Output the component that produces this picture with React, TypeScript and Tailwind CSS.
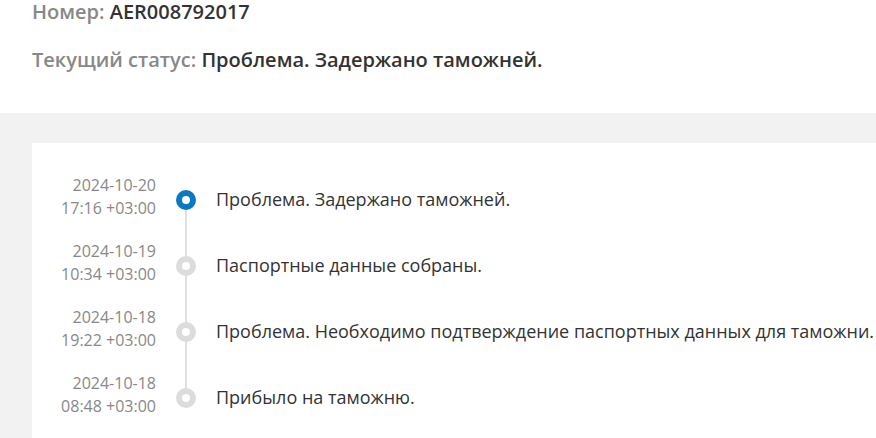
import React from 'react';

const events = [
  { date: '2024-10-20', time: '17:16 +03:00', text: 'Проблема. Задержано таможней.', active: true },
  { date: '2024-10-19', time: '10:34 +03:00', text: 'Паспортные данные собраны.' },
  { date: '2024-10-18', time: '19:22 +03:00', text: 'Проблема. Необходимо подтверждение паспортных данных для таможни.' },
  { date: '2024-10-18', time: '08:48 +03:00', text: 'Прибыло на таможню.' },
];

const App: React.FC = () => {
  return (
    <div className="w-[876px] h-[438px] overflow-hidden bg-white font-['Open_Sans',sans-serif]">
      {/* Header */}
      <div className="px-8 pb-[41px]">
        <p className="text-[20px] leading-6 font-semibold whitespace-nowrap">
          <span className="text-[#888]">Номер: </span>
          <span className="text-[#333]">AER008792017</span>
        </p>
        <p className="mt-6 text-[20px] leading-6 font-semibold whitespace-nowrap">
          <span className="text-[#888]">Текущий статус: </span>
          <span className="text-[#333]">Проблема. Задержано таможней.</span>
        </p>
      </div>

      {/* Timeline */}
      <div className="bg-[#f2f2f2] pt-[30px] pl-8 h-full">
        <div className="bg-white w-[900px] pt-[31px] pb-10">
          {events.map((e, i) => (
            <div key={i} className="flex items-stretch h-[66px]">
              <div className="w-[124px] text-right text-[16px] leading-[23px] text-[#888]">
                <div>{e.date}</div>
                <div>{e.time}</div>
              </div>
              <div className="relative w-[60px] flex justify-center">
                {i < events.length - 1 && (
                  <div className="absolute left-1/2 -translate-x-1/2 top-[25px] h-[66px] w-[2px] bg-[#e0e0e0]" />
                )}
                <div
                  className={`relative mt-[16px] w-5 h-5 rounded-full border-[6px] bg-white ${
                    e.active ? 'border-[#0a78c2]' : 'border-[#dcdcdc]'
                  }`}
                />
              </div>
              <div className="pt-[13px] text-[18px] leading-6 text-[#333] whitespace-nowrap">{e.text}</div>
            </div>
          ))}
        </div>
      </div>
    </div>
  );
};

export default App;
